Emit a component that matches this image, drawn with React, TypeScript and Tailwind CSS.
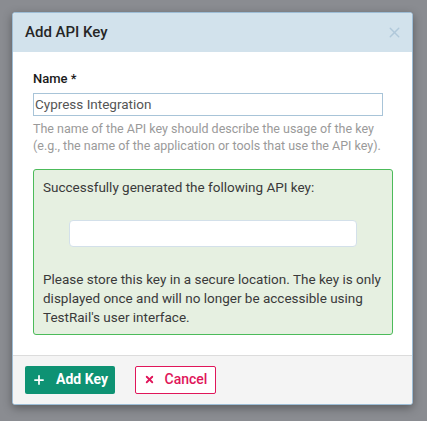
import { Plus, X } from "lucide-react";

export default function App() {
  return (
    <div
      className="min-h-[421px] w-full bg-[#8a8c91] pt-[12px] pl-[12px]"
      style={{ fontFamily: "Roboto, 'Liberation Sans', sans-serif" }}
    >
      <div className="w-[401px] overflow-hidden rounded-[3px] border border-[#9dbdd6] bg-white shadow-[0_3px_10px_rgba(0,0,0,0.35)]">
        {/* Header */}
        <div className="flex h-[39px] items-center justify-between bg-[#d2e2ec] pl-[12px] pr-[9px]">
          <span className="text-[15px] font-medium text-[#262626]">Add API Key</span>
          <X className="h-[17px] w-[17px] text-[#b0c8da]" strokeWidth={2} />
        </div>

        {/* Body */}
        <div className="px-[20px] pt-[17px] pb-[20px]">
          <div className="text-[13px] font-medium text-[#1a1a1a]">Name *</div>
          <input
            readOnly
            value="Cypress Integration"
            className="mt-[4px] block h-[23px] w-[350px] border border-[#a8c4d8] px-[1px] text-[13.5px] text-[#555] outline-none"
          />
          <p className="mt-[4px] text-[12.5px] leading-[17px] text-[#9a9a9a]">
            The name of the API key should describe the usage of the key (e.g., the name of the
            application or tools that use the API key).
          </p>

          <div className="mt-[15px] w-[360px] rounded-[3px] border border-[#4cbb5a] bg-[#e6f0e1] px-[9px] pt-[8px] pb-[7px] text-[13.5px] leading-[19px] text-[#3a3a3a]">
            <div>Successfully generated the following API key:</div>
            <div className="mt-[23px] mb-[23px] ml-[26px] h-[27px] w-[288px] rounded-[4px] border border-[#d3e0ea] bg-white" />
            <p>
              Please store this key in a secure location. The key is only displayed once and will no
              longer be accessible using TestRail's user interface.
            </p>
          </div>
        </div>

        {/* Footer */}
        <div className="flex items-center gap-[20px] border-t border-[#dcdcdc] bg-[#f4f4f4] px-[12px] pt-[10px] pb-[10px]">
          <button className="flex h-[28px] w-[90px] items-center justify-center gap-[10px] rounded-[2px] bg-[#0e9273] text-[14px] font-bold text-white">
            <Plus className="h-[14px] w-[14px]" strokeWidth={3} />
            Add Key
          </button>
          <button className="flex h-[28px] w-[81px] items-center justify-center gap-[10px] rounded-[2px] border border-[#e0165a] bg-white text-[14px] font-medium text-[#e0165a]">
            <X className="h-[11px] w-[11px]" strokeWidth={4} />
            Cancel
          </button>
        </div>
      </div>
    </div>
  );
}
